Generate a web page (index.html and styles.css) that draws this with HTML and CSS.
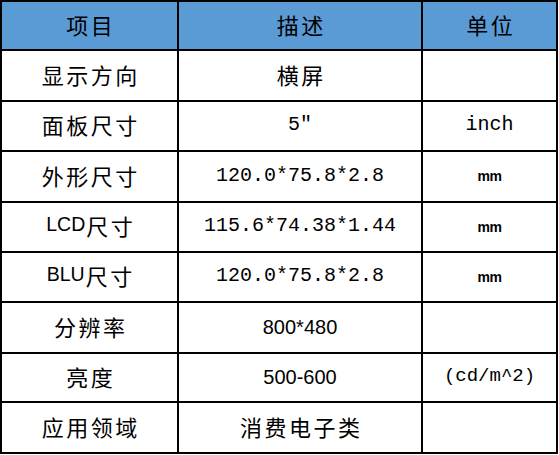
FILE: index.html
```html
<!DOCTYPE html>
<html lang="zh">
<head>
<meta charset="utf-8">
<link rel="stylesheet" href="styles.css">
</head>
<body>
<div class="table">
  <div class="cell head cjk">项目</div>
  <div class="cell head cjk">描述</div>
  <div class="cell head cjk">单位</div>

  <div class="cell cjk">显示方向</div>
  <div class="cell cjk">横屏</div>
  <div class="cell"></div>

  <div class="cell cjk">面板尺寸</div>
  <div class="cell mono">5"</div>
  <div class="cell mono">inch</div>

  <div class="cell cjk">外形尺寸</div>
  <div class="cell mono">120.0*75.8*2.8</div>
  <div class="cell mm">mm</div>

  <div class="cell cjk"><span class="lat">LCD</span>尺寸</div>
  <div class="cell mono">115.6*74.38*1.44</div>
  <div class="cell mm">mm</div>

  <div class="cell cjk"><span class="lat">BLU</span>尺寸</div>
  <div class="cell mono">120.0*75.8*2.8</div>
  <div class="cell mm">mm</div>

  <div class="cell cjk">分辨率</div>
  <div class="cell num">800*480</div>
  <div class="cell"></div>

  <div class="cell cjk">亮度</div>
  <div class="cell num">500-600</div>
  <div class="cell mono small">(cd/m^2)</div>

  <div class="cell cjk">应用领域</div>
  <div class="cell cjk">消费电子类</div>
  <div class="cell"></div>
</div>
</body>
</html>
```

FILE: styles.css
```css
html, body {
  margin: 0;
  padding: 0;
  background: #fff;
}

.table {
  display: grid;
  width: 558px;
  box-sizing: border-box;
  grid-template-columns: 175px 242px 133px;
  grid-template-rows: 47px 49px 48px 49px 48px 48px 49px 47px 49px;
  gap: 2px;
  padding: 2px;
  background: #000;
}

.cell {
  background: #fff;
  display: flex;
  align-items: center;
  justify-content: center;
  color: #000;
  white-space: pre;
  line-height: 1;
}

.head {
  background: #5b9bd5;
}

.cjk {
  font-family: "Noto Sans CJK SC", sans-serif;
  font-size: 22px;
  letter-spacing: 2.5px;
  padding-left: 2.5px;
  padding-bottom: 4px;
}

.lat {
  font-family: "Liberation Sans", sans-serif;
  font-size: 19.5px;
  letter-spacing: 0;
  margin-right: 1px;
}

.mono {
  font-family: "Liberation Mono", monospace;
  font-size: 20px;
  padding-bottom: 2px;
}

.small {
  font-size: 19px;
}

.num {
  font-family: "Liberation Sans", sans-serif;
  font-size: 20px;
  padding-bottom: 2px;
}

.mm {
  font-family: "Liberation Sans", sans-serif;
  font-size: 14px;
  font-weight: bold;
  letter-spacing: -0.5px;
  padding-bottom: 1px;
}
```
